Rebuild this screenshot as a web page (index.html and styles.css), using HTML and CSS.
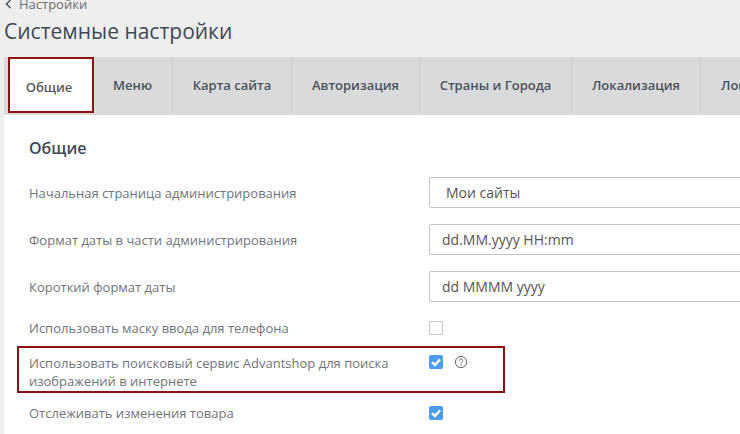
FILE: index.html
```html
<!DOCTYPE html>
<html lang="en">
<head>
    <meta charset="UTF-8">
    <title>Системные настройки</title>
    <link rel="stylesheet" href="styles.css">
</head>
<body>
    <div class="page-head">
        <a class="back-link" href="#">
            <svg class="back-icon" width="7" height="10" viewBox="0 0 7 10"><path d="M5.5 1 L1.5 5 L5.5 9" fill="none" stroke="#555b62" stroke-width="1.6"/></svg>
            Настройки
        </a>
        <h1>Системные настройки</h1>
    </div>

    <div class="panel">
        <div class="tabs">
            <div class="tab tab-active">Общие</div>
            <div class="tab tab-menu">Меню</div>
            <div class="tab tab-map">Карта сайта</div>
            <div class="tab tab-auth">Авторизация</div>
            <div class="tab tab-geo">Страны и Города</div>
            <div class="tab tab-loc">Локализация</div>
            <div class="tab tab-last">Лог</div>
        </div>

        <div class="content">
            <h2>Общие</h2>

            <div class="row row-field">
                <label>Начальная страница администрирования</label>
                <div class="field select-field">Мои сайты</div>
            </div>
            <div class="row row-field">
                <label>Формат даты в части администрирования</label>
                <div class="field">dd.MM.yyyy HH:mm</div>
            </div>
            <div class="row row-field">
                <label>Короткий формат даты</label>
                <div class="field">dd MMMM yyyy</div>
            </div>
            <div class="row row-mask">
                <label>Использовать маску ввода для телефона</label>
                <span class="check"></span>
            </div>
            <div class="row row-search">
                <label>Использовать поисковый сервис Advantshop для поиска изображений в интернете</label>
                <span class="check check-on">
                    <svg width="14" height="14" viewBox="0 0 14 14"><path d="M3 7.2 L5.9 10 L11 4.4" fill="none" stroke="#fff" stroke-width="2.4"/></svg>
                </span>
                <svg class="help" width="14" height="14" viewBox="0 0 14 14">
                    <circle cx="7" cy="7" r="5.6" fill="none" stroke="#666" stroke-width="1"/>
                    <path d="M5.2 5.6 C5.2 3.4 8.8 3.4 8.8 5.5 C8.8 6.8 7 6.8 7 8.4" fill="none" stroke="#666" stroke-width="1"/>
                    <circle cx="7" cy="10" r="0.7" fill="#666"/>
                </svg>
            </div>
            <div class="row row-track">
                <label>Отслеживать изменения товара</label>
                <span class="check check-on">
                    <svg width="14" height="14" viewBox="0 0 14 14"><path d="M3 7.2 L5.9 10 L11 4.4" fill="none" stroke="#fff" stroke-width="2.4"/></svg>
                </span>
            </div>
        </div>

        <!-- red annotation frames drawn over the screenshot -->
        <div class="mark mark-tab"></div>
        <div class="mark mark-row"></div>
    </div>
</body>
</html>
```

FILE: styles.css
```css
html, body {
    height: 100%;
}

body {
    margin: 0;
    width: 740px;
    height: 434px;
    overflow: hidden;
    background: #eeeeee;
    font-family: "Open Sans", Arial, sans-serif;
    color: #4a4f55;
}

.page-head {
    display: flow-root;
    height: 57px;
    padding-left: 4px;
}

.back-link {
    display: flex;
    align-items: center;
    gap: 7px;
    height: 18px;
    margin-top: -5px;
    font-size: 13px;
    color: #6b7075;
    text-decoration: none;
}

.back-icon {
    margin-left: 1px;
}

h1 {
    margin: 3px 0 0;
    font-size: 21px;
    line-height: 30px;
    font-weight: 400;
    color: #3f4954;
}

.panel {
    position: relative;
    margin-left: 4px;
    height: 377px;
    background: #fff;
}

.tabs {
    display: flex;
    height: 58px;
    background: #d9dadc;
    white-space: nowrap;
}

.tab {
    box-sizing: border-box;
    height: 56px;
    display: flex;
    align-items: center;
    justify-content: center;
    font-size: 13px;
    font-weight: 600;
    color: #4a525c;
    border-right: 1px solid #c9cacc;
    flex-shrink: 0;
}

.tab-active {
    width: 85px;
    margin-left: 4px;
    padding-top: 3px;
    padding-right: 3px;
    background: #fff;
    color: #55595e;
    border-right: 0;
}

.tab-menu { width: 80px; }
.tab-map { width: 119px; }
.tab-auth { width: 128px; }
.tab-geo { width: 152px; }
.tab-loc { width: 129px; }
.tab-last { width: 80px; border-right: 0; justify-content: flex-start; padding-left: 20px; }

.content {
    padding: 22px 0 0 25px;
}

h2 {
    margin: 0 0 18px;
    font-size: 16px;
    line-height: 22px;
    font-weight: 600;
    color: #3f4954;
}

.row {
    display: flex;
    align-items: flex-start;
    font-size: 13px;
    color: #707478;
}

.row label {
    box-sizing: border-box;
    width: 400px;
    flex-shrink: 0;
    line-height: 18px;
    padding-right: 30px;
}

.row-field {
    height: 31px;
    margin-bottom: 16px;
    align-items: center;
}

.field {
    box-sizing: border-box;
    width: 340px;
    height: 31px;
    flex-shrink: 0;
    padding-left: 12px;
    border: 1px solid #c4c4c4;
    border-radius: 2px;
    background: #fff;
    font-size: 14px;
    line-height: 29px;
    color: #555;
}

.select-field {
    padding-left: 16px;
}

.row-mask {
    margin-top: -5px;
    height: 30px;
    align-items: center;
}

.row-search {
    margin-top: 11px;
    height: 36px;
}

.row-track {
    margin-top: 12px;
    align-items: center;
    height: 22px;
}

.check {
    box-sizing: border-box;
    width: 14px;
    height: 14px;
    display: block;
    border: 1px solid #c8c8c8;
    border-radius: 2px;
    background: #fff;
    flex-shrink: 0;
}

.check-on {
    border: 0;
    background: #4c9cf0;
}

.check svg {
    display: block;
}

.row-search .check {
    margin-top: 1px;
}

.help {
    margin: 1px 0 0 11px;
}

.mark {
    position: absolute;
    box-sizing: border-box;
    border: 2px solid #8e1010;
}

.mark-tab {
    left: 4px;
    top: 0;
    width: 86px;
    height: 56px;
}

.mark-row {
    left: 13px;
    top: 289px;
    width: 488px;
    height: 47px;
}
```
